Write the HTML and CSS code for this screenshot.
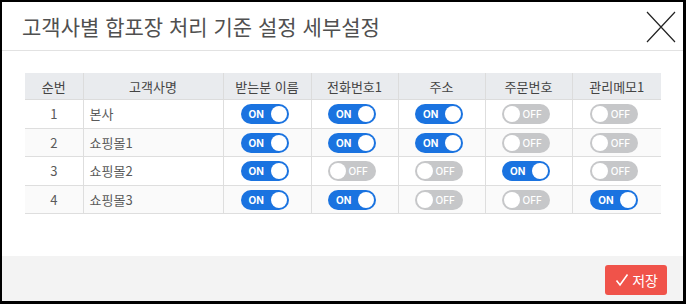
FILE: index.html
```html
<!DOCTYPE html>
<html lang="ko">
<head>
  <meta charset="UTF-8" />
  <title>고객사별 합포장 처리 기준 설정</title>
  <link rel="stylesheet" href="styles.css">
</head>
<body>
  <div class="modal">
    <div class="modal-head">
      <h2>고객사별 합포장 처리 기준 설정 세부설정</h2>
      <button class="close-btn" aria-label="닫기">
        <svg width="30" height="32" viewBox="0 0 30 32"><path d="M1 1 L29 31 M29 1 L1 31" stroke="#222" stroke-width="1.2" fill="none"/></svg>
      </button>
    </div>

    <div class="modal-body">
      <table class="rule-table">
        <colgroup>
          <col class="w-no">
          <col class="w-name">
          <col class="w-88">
          <col class="w-87">
          <col class="w-87">
          <col class="w-87">
          <col class="w-89">
        </colgroup>
        <thead>
          <tr>
            <th>순번</th>
            <th>고객사명</th>
            <th>받는분 이름</th>
            <th>전화번호1</th>
            <th>주소</th>
            <th>주문번호</th>
            <th>관리메모1</th>
          </tr>
        </thead>
        <tbody id="rows"></tbody>
      </table>
    </div>

    <div class="modal-foot">
      <button class="save-btn">
        <svg width="14" height="14" viewBox="0 0 14 14"><path d="M1.5 7.5 L5 12 L12.5 1.5" stroke="#fff" stroke-width="1.6" fill="none"/></svg>
        저장
      </button>
    </div>
  </div>

  <script>
    const data = [
      { no: 1, name: '본사', flags: [1, 1, 1, 0, 0] },
      { no: 2, name: '쇼핑몰1', flags: [1, 1, 1, 0, 0] },
      { no: 3, name: '쇼핑몰2', flags: [1, 0, 0, 1, 0] },
      { no: 4, name: '쇼핑몰3', flags: [1, 1, 0, 0, 1] }
    ];

    const toggle = (on) => on
      ? '<span class="toggle on"><span class="lbl">ON</span><span class="knob"></span></span>'
      : '<span class="toggle off"><span class="knob"></span><span class="lbl">OFF</span></span>';

    const tbody = document.getElementById('rows');
    data.forEach(r => {
      tbody.innerHTML += `
        <tr>
          <td>${r.no}</td>
          <td class="c-name">${r.name}</td>
          ${r.flags.map(f => `<td>${toggle(f)}</td>`).join('')}
        </tr>
      `;
    });
  </script>
</body>
</html>
```

FILE: styles.css
```css
html, body {
  margin: 0;
  padding: 0;
  background: #000;
}

body {
  font-family: "Noto Sans CJK KR", "Noto Sans", sans-serif;
  color: #555;
  padding: 2px 3px 3px 2px;
  height: 304px;
  box-sizing: border-box;
}

.modal {
  background: #fff;
  height: 299px;
  display: flex;
  flex-direction: column;
}

.modal-head {
  height: 48px;
  border-bottom: 1px solid #e2e2e2;
  display: flex;
  align-items: center;
  justify-content: space-between;
  padding: 0 6px 0 20px;
}

.modal-head h2 {
  margin: 0;
  font-size: 21px;
  font-weight: 400;
  color: #505050;
}

.close-btn {
  background: none;
  border: none;
  padding: 0;
  width: 32px;
  height: 34px;
  display: flex;
  align-items: center;
  justify-content: center;
  margin-top: 2px;
}

.modal-body {
  flex: 1;
  padding: 22px 22px 0 23px;
}

.rule-table {
  width: 636px;
  table-layout: fixed;
  border-collapse: collapse;
  font-size: 13px;
}

.w-no { width: 58px; }
.w-name { width: 140px; }
.w-88 { width: 88px; }
.w-87 { width: 87px; }
.w-89 { width: 89px; }

.rule-table th {
  background: #e9ebee;
  font-weight: 400;
  color: #444;
  height: 26px;
  padding: 0;
  border-left: 1px solid #dcdcdc;
  border-bottom: 1px solid #dcdcdc;
}

.rule-table td {
  height: 27.5px;
  padding: 0;
  text-align: center;
  color: #5a5a5a;
  border-left: 1px solid #dedede;
  border-bottom: 1px solid #dedede;
}

.rule-table tr > :first-child {
  border-left: none;
}

.rule-table tbody tr:nth-child(even) td {
  background: #fafafa;
}

.rule-table td.c-name {
  text-align: left;
  padding-left: 6px;
}

.toggle {
  display: inline-flex;
  align-items: center;
  width: 48px;
  height: 20px;
  border-radius: 10px;
  box-sizing: border-box;
  padding: 0 2px;
  margin-right: 5px;
  vertical-align: middle;
  font-family: "Inter", "Noto Sans", sans-serif;
  font-size: 10px;
  font-weight: 700;
  color: #fff;
}

.toggle.on {
  background: #1a73e0;
  justify-content: space-between;
  padding-left: 8px;
}

.toggle.off {
  background: #c6c7c9;
  justify-content: space-between;
  padding-right: 8px;
  font-weight: 500;
}

.knob {
  width: 16px;
  height: 16px;
  border-radius: 50%;
  background: #fff;
}

.modal-foot {
  height: 45px;
  background: #f3f3f3;
  display: flex;
  align-items: center;
  justify-content: flex-end;
  padding-right: 16px;
}

.save-btn {
  background: #f0534a;
  color: #fff;
  border: none;
  border-radius: 3px;
  height: 30px;
  padding: 0 9px 0 10px;
  display: flex;
  align-items: center;
  gap: 3px;
  font-family: "Noto Sans CJK KR", sans-serif;
  font-size: 14px;
  margin-top: 3px;
}
```
